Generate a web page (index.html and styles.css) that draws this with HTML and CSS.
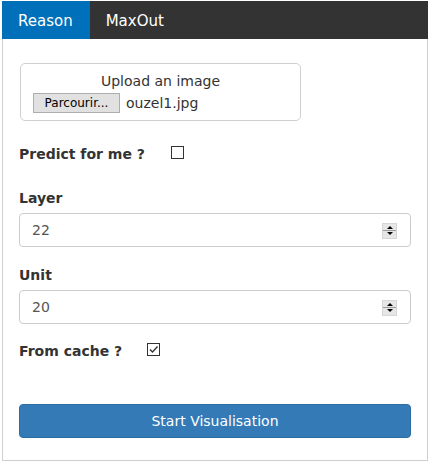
FILE: index.html
```html
<!DOCTYPE html>
<html>
<head>
<meta charset="utf-8">
<link rel="stylesheet" href="styles.css">
</head>
<body>
<div class="app">
  <nav class="tabs">
    <span class="tab active">Reason</span>
    <span class="tab">MaxOut</span>
  </nav>
  <div class="panel">
    <div class="upload">
      <div class="upload-title">Upload an image</div>
      <div class="file-row">
        <span class="file-btn">Parcourir...</span>
        <span class="file-name">ouzel1.jpg</span>
      </div>
    </div>

    <div class="check-row predict">
      <span class="label">Predict for me ?</span>
      <span class="checkbox"></span>
    </div>

    <div class="group layer">
      <div class="label">Layer</div>
      <div class="input">
        <span class="value">22</span>
        <span class="spin"><span class="up"></span><span class="down"></span></span>
      </div>
    </div>

    <div class="group unit">
      <div class="label">Unit</div>
      <div class="input">
        <span class="value">20</span>
        <span class="spin"><span class="up"></span><span class="down"></span></span>
      </div>
    </div>

    <div class="check-row cache">
      <span class="label">From cache ?</span>
      <span class="checkbox checked">
        <svg width="11" height="11" viewBox="0 0 11 11"><path d="M2 5.5 L4.5 8 L9.5 2.5" fill="none" stroke="#333" stroke-width="1.4"/></svg>
      </span>
    </div>

    <div class="btn-primary">Start Visualisation</div>
  </div>
</div>
</body>
</html>
```

FILE: styles.css
```css
* { box-sizing: border-box; }
body {
  margin: 0;
  background: #fff;
  font-family: "DejaVu Sans", Verdana, sans-serif;
  font-size: 14px;
  line-height: 20px;
  color: #333;
}
.app {
  margin: 1px 0 0 2px;
  width: 426px;
}
.tabs {
  display: flex;
  height: 38px;
  background: #333;
}
.tab {
  padding: 0 17px 0 16px;
  line-height: 40px;
  font-size: 15px;
  color: #fff;
}
.tab.active {
  background: #0070ba;
}
.panel {
  border: 1px solid #cfcfcf;
  border-top: none;
  padding: 24px 16px 22px 16px;
}
.upload {
  width: 281px;
  margin-left: 1px;
  border: 1px solid #cfcfcf;
  border-radius: 5px;
  padding: 7px 12px 7px 12px;
}
.upload-title {
  text-align: center;
}
.file-row {
  display: flex;
  align-items: center;
  margin-top: 2px;
  height: 20px;
}
.file-btn {
  display: inline-block;
  width: 87px;
  height: 20px;
  background: #e1e1e1;
  border: 1px solid #adadad;
  font-size: 12px;
  line-height: 18px;
  text-align: center;
  color: #000;
}
.file-name {
  margin-left: 6px;
  color: #333;
}
.label {
  font-weight: bold;
}
.check-row {
  display: flex;
  align-items: center;
  height: 20px;
}
.checkbox {
  width: 13px;
  height: 13px;
  border: 1px solid #333;
  background: #fff;
  display: flex;
  align-items: center;
  justify-content: center;
}
.predict {
  margin-top: 23px;
}
.predict .checkbox { margin-left: 26px; margin-top: -3px; }
.cache .checkbox { margin-left: 25px; margin-top: -3px; }
.group.layer { margin-top: 24px; }
.group.unit { margin-top: 18px; }
.group .label { margin-bottom: 5px; }
.input {
  height: 34px;
  border: 1px solid #ccc;
  border-radius: 4px;
  display: flex;
  align-items: center;
  justify-content: space-between;
  padding: 0 13px 0 12px;
  color: #555;
}
.spin {
  width: 15px;
  height: 16px;
  display: flex;
  flex-direction: column;
  background: #e6e6e6;
  border: 1px solid #d6d6d6;
  margin-top: 1px;
}
.spin .up, .spin .down {
  flex: 1;
  position: relative;
}
.spin .up { border-bottom: 1px solid #9a9a9a; }
.spin .up::after, .spin .down::after {
  content: "";
  position: absolute;
  left: 4px;
  width: 0;
  height: 0;
  border-left: 3px solid transparent;
  border-right: 3px solid transparent;
}
.spin .up::after { top: 2px; border-bottom: 3px solid #000; }
.spin .down::after { top: 1px; border-top: 3px solid #000; }
.cache { margin-top: 17px; }
.btn-primary {
  margin-top: 43px;
  height: 34px;
  background: #337ab7;
  border: 1px solid #2e6da4;
  border-radius: 4px;
  color: #fff;
  text-align: center;
  line-height: 32px;
}
```
